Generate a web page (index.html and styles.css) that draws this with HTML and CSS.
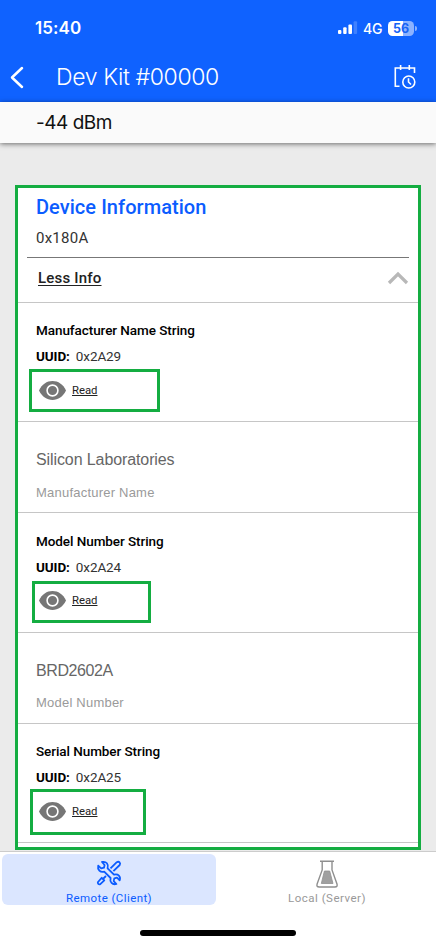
FILE: index.html
```html
<!DOCTYPE html>
<html lang="en">
<head>
<meta charset="utf-8">
<meta name="viewport" content="width=device-width, initial-scale=1">
<title>Dev Kit</title>
<link rel="stylesheet" href="styles.css">
</head>
<body>
<svg class="defs" width="0" height="0"><symbol id="eye" viewBox="0 0 27 19"><path fill="#767676" d="M0 9.5C3 3.3 7.8.1 13.5.1S24 3.3 27 9.500C24 15.700 19.200 18.900 13.500 18.900S3 15.700 0 9.500Z"/><circle cx="13.500" cy="9.500" r="5.400" fill="#767676" stroke="#fff" stroke-width="1.600"/></symbol></svg>
<header class="header">
  <div class="status">
    <span class="time">15:40</span>
    <svg class="signal" width="20" height="14" viewBox="0 0 20 14" fill="#fff"><rect x="0" y="9" width="3.400" height="4" rx="1"/><rect x="5.200" y="6.300" width="3.400" height="6.700" rx="1"/><rect x="10.400" y="3.500" width="3.600" height="9.500" rx="1"/><rect x="15.600" y="0.300" width="3.500" height="12.700" rx="1" opacity=".2"/></svg>
    <span class="network">4G</span>
    <span class="battery">56</span><i class="battery-tip"></i>
  </div>
  <div class="titlebar">
    <svg class="back" width="14" height="23" viewBox="0 0 14 23"><path d="M12 2L2 11.500L12 21" fill="none" stroke="#fff" stroke-width="2.500" stroke-linecap="round" stroke-linejoin="round"/></svg>
    <h1 class="title">Dev Kit #00000</h1>
    <svg class="calendar" width="24" height="26" viewBox="0 0 24 26" fill="none" stroke="#fff" stroke-width="1.600"><path d="M6.500 22.300H2.300V4H21.500V9M7.600 1V6M16.300 1V6"/><circle cx="15.800" cy="18" r="6"/><path d="M15.500 14.300V18L18 20.500"/></svg>
  </div>
</header>
<div class="rssi">-44 dBm</div>
<main class="content">
  <section class="card">
    <h2 class="service">Device Information</h2>
    <div class="service-id">0x180A</div>
    <div class="toggle"><span class="less">Less Info</span><svg class="chevron" width="22" height="14" viewBox="0 0 22 14"><path d="M2 12L11 3L20 12" fill="none" stroke="#b8b8b8" stroke-width="3.200"/></svg></div>
    <div class="characteristic">
      <h3 class="name">Manufacturer Name String</h3>
      <div class="uuid"><b>UUID:</b><span>0x2A29</span></div>
      <div class="read read-a"><svg class="eye" width="27" height="19"><use href="#eye"/></svg><span>Read</span></div>
    </div>
    <div class="value"><div class="data data-a">Silicon Laboratories</div><div class="label label-a">Manufacturer Name</div></div>
    <div class="characteristic second">
      <h3 class="name">Model Number String</h3>
      <div class="uuid"><b>UUID:</b><span>0x2A24</span></div>
      <div class="read read-b"><svg class="eye" width="27" height="19"><use href="#eye"/></svg><span>Read</span></div>
    </div>
    <div class="value"><div class="data data-b">BRD2602A</div><div class="label label-b">Model Number</div></div>
    <div class="characteristic third">
      <h3 class="name">Serial Number String</h3>
      <div class="uuid"><b>UUID:</b><span>0x2A25</span></div>
      <div class="read read-c"><svg class="eye" width="27" height="19"><use href="#eye"/></svg><span>Read</span></div>
    </div>
  </section>
</main>
<footer class="footer">
  <nav class="tabs">
    <div class="tab active">
      <svg width="26" height="26" viewBox="0 0 26 26" fill="none" stroke="#0b5cff" stroke-width="1.800" stroke-linejoin="round"><path d="M2.200 5.600L5.200 8.300L8 7.700L8.600 5L6 2C10.300 1 12.900 4.300 11.600 8.300L18 14.700C22.200 13.500 25 16.500 23.700 20.300L21 17.700L18.300 18.400L17.700 21.100L20.400 24C16.300 25.200 13.500 21.900 14.600 18L8.200 11.700C4.300 12.800 1.200 9.600 2.200 5.600Z"/><path d="M14.500 8.300L20.800 2.200C23 .9 25 3 23.700 5L17.400 11.200M10 16L6.900 19M5.700 17.800L8.300 20.400L4.300 24.200C2.700 25 1.300 23.500 2 22Z"/></svg>
      <span>Remote (Client)</span>
    </div>
    <div class="tab local">
      <svg width="24" height="28" viewBox="0 0 24 28"><path d="M5 1.200H19M7.200 1.200V10L2.100 24Q1.200 27 4.200 27H20Q22.800 27 22 24L17 10V1.200" fill="none" stroke="#8f8f8f" stroke-width="1.400"/><path d="M9.400 11H14.700L18 23.500H6.300Z" fill="#a0a0a0" stroke="#919191" stroke-width=".8"/></svg>
      <span>Local (Server)</span>
    </div>
  </nav>
  <div class="home"></div>
</footer>
</body>
</html>
```

FILE: styles.css
```css
* { box-sizing: border-box; }
body { margin: 0; width: 436px; height: 945px; overflow: hidden; background: #ebebeb; font-family: Roboto, sans-serif; display: flex; flex-direction: column; }
h1, h2, h3 { margin: 0; font-weight: 500; }
.defs { position: absolute; }
svg { display: block; flex: none; }
.header { height: 102px; background: #0f62ff; color: #fff; flex: none; font-family: Inter, sans-serif; }
.status { height: 52px; display: flex; align-items: center; padding: 4px 0 0 35px; }
.time { font-size: 17px; font-weight: 600; letter-spacing: .1px; width: 303px; }
.network { margin-left: 5px; width: 25px; font-size: 14px; font-weight: 500; letter-spacing: -.3px; }
.battery { width: 26px; height: 15px; border-radius: 4.500px; background: linear-gradient(90deg, #fff 56%, #8cb2ff 56%); color: #1764f5; font-size: 12.500px; line-height: 15px; font-weight: 700; text-align: center; }
.battery-tip { width: 2px; height: 5px; margin-left: 1px; border-radius: 0 2px 2px 0; background: #8cb2ff; }
.titlebar { height: 50px; display: flex; align-items: center; padding: 0 0 0 10px; }
.title { margin-left: 32px; width: 337px; font-size: 23px; font-weight: 350; line-height: 30px; letter-spacing: -.38px; }
.rssi { height: 41px; flex: none; background: #fafafa; padding-left: 36px; font: 400 19px/42px Inter, sans-serif; letter-spacing: -.5px; color: #111; box-shadow: 0 1px 5px rgba(0,0,0,.55); z-index: 1; }
.content { padding: 42px 15px 0; height: 708px; flex: none; }
.card { height: 665px; border: 3px solid #14ad41; background: #fff; display: flex; flex-direction: column; }
.service { color: #0b5cff; font-size: 20px; line-height: 24px; padding: 7px 0 0 18px; height: 36px; letter-spacing: .05px; }
.service-id { margin: 0 9px; height: 34px; padding-left: 9px; font-size: 15px; line-height: 28px; letter-spacing: .25px; color: #333; border-bottom: 1px solid #777; }
.toggle { height: 45px; display: flex; align-items: center; justify-content: space-between; padding: 0 9px 4px 20px; border-bottom: 1px solid #c6c6c6; }
.less { font-size: 15px; font-weight: 500; letter-spacing: .2px; color: #222; text-decoration: underline; text-underline-offset: 2px; }
.characteristic { height: 119px; border-bottom: 1px solid #c6c6c6; padding: 16px 0 0 18px; }
.second { height: 120px; padding-top: 17px; }
.name { font-size: 13.500px; line-height: 22px; letter-spacing: -.07px; color: #000; }
.uuid { margin-top: 5px; font-size: 13.500px; line-height: 20px; letter-spacing: -.1px; display: flex; gap: 6px; color: #333; }
.uuid b { color: #000; font-weight: 700; }
.read { border: 3px solid #14ad41; display: flex; }
.read span { margin: 3px 0 0 6px; font-size: 11.300px; line-height: 13px; color: #222; text-decoration: underline; text-underline-offset: 1px; }
.read-a { width: 131px; height: 43px; margin: 3px 0 0 -7px; padding: 9px 0 0 7px; }
.read-b { width: 119px; height: 42px; margin: 4px 0 0 -4px; padding: 7px 0 0 4px; }
.read-c { width: 116px; height: 46px; margin: 2px 0 0 -6px; padding: 10px 0 0 6px; }
.value { height: 91px; border-bottom: 1px solid #c6c6c6; padding: 28px 0 0 18px; font-family: "Liberation Sans", sans-serif; }
.data { font-size: 16px; line-height: 20px; color: #666; }
.data-a { letter-spacing: -.1px; }
.data-b { letter-spacing: -.4px; }
.label { margin-top: 14px; font-size: 13px; line-height: 18px; letter-spacing: .22px; color: #9a9a9a; }
.label-b { margin-top: 13px; }
.footer { height: 94px; flex: none; background: #fff; border-top: 1px solid #ccc; padding: 2px 2px 0; }
.tabs { display: grid; grid-template-columns: 214px 1fr; gap: 2px; }
.tab { height: 51px; border-radius: 6px; display: flex; flex-direction: column; align-items: center; justify-content: space-between; padding: 6px 0 0; color: #999; font-size: 11.500px; letter-spacing: .5px; line-height: 13px; }
.local { padding-left: 2px; }
.active { background: #dbe6ff; color: #0b5cff; font-weight: 450; letter-spacing: .42px; }
.home { width: 156px; height: 6px; border-radius: 3px; background: #000; margin: 25px auto 0; }
```
